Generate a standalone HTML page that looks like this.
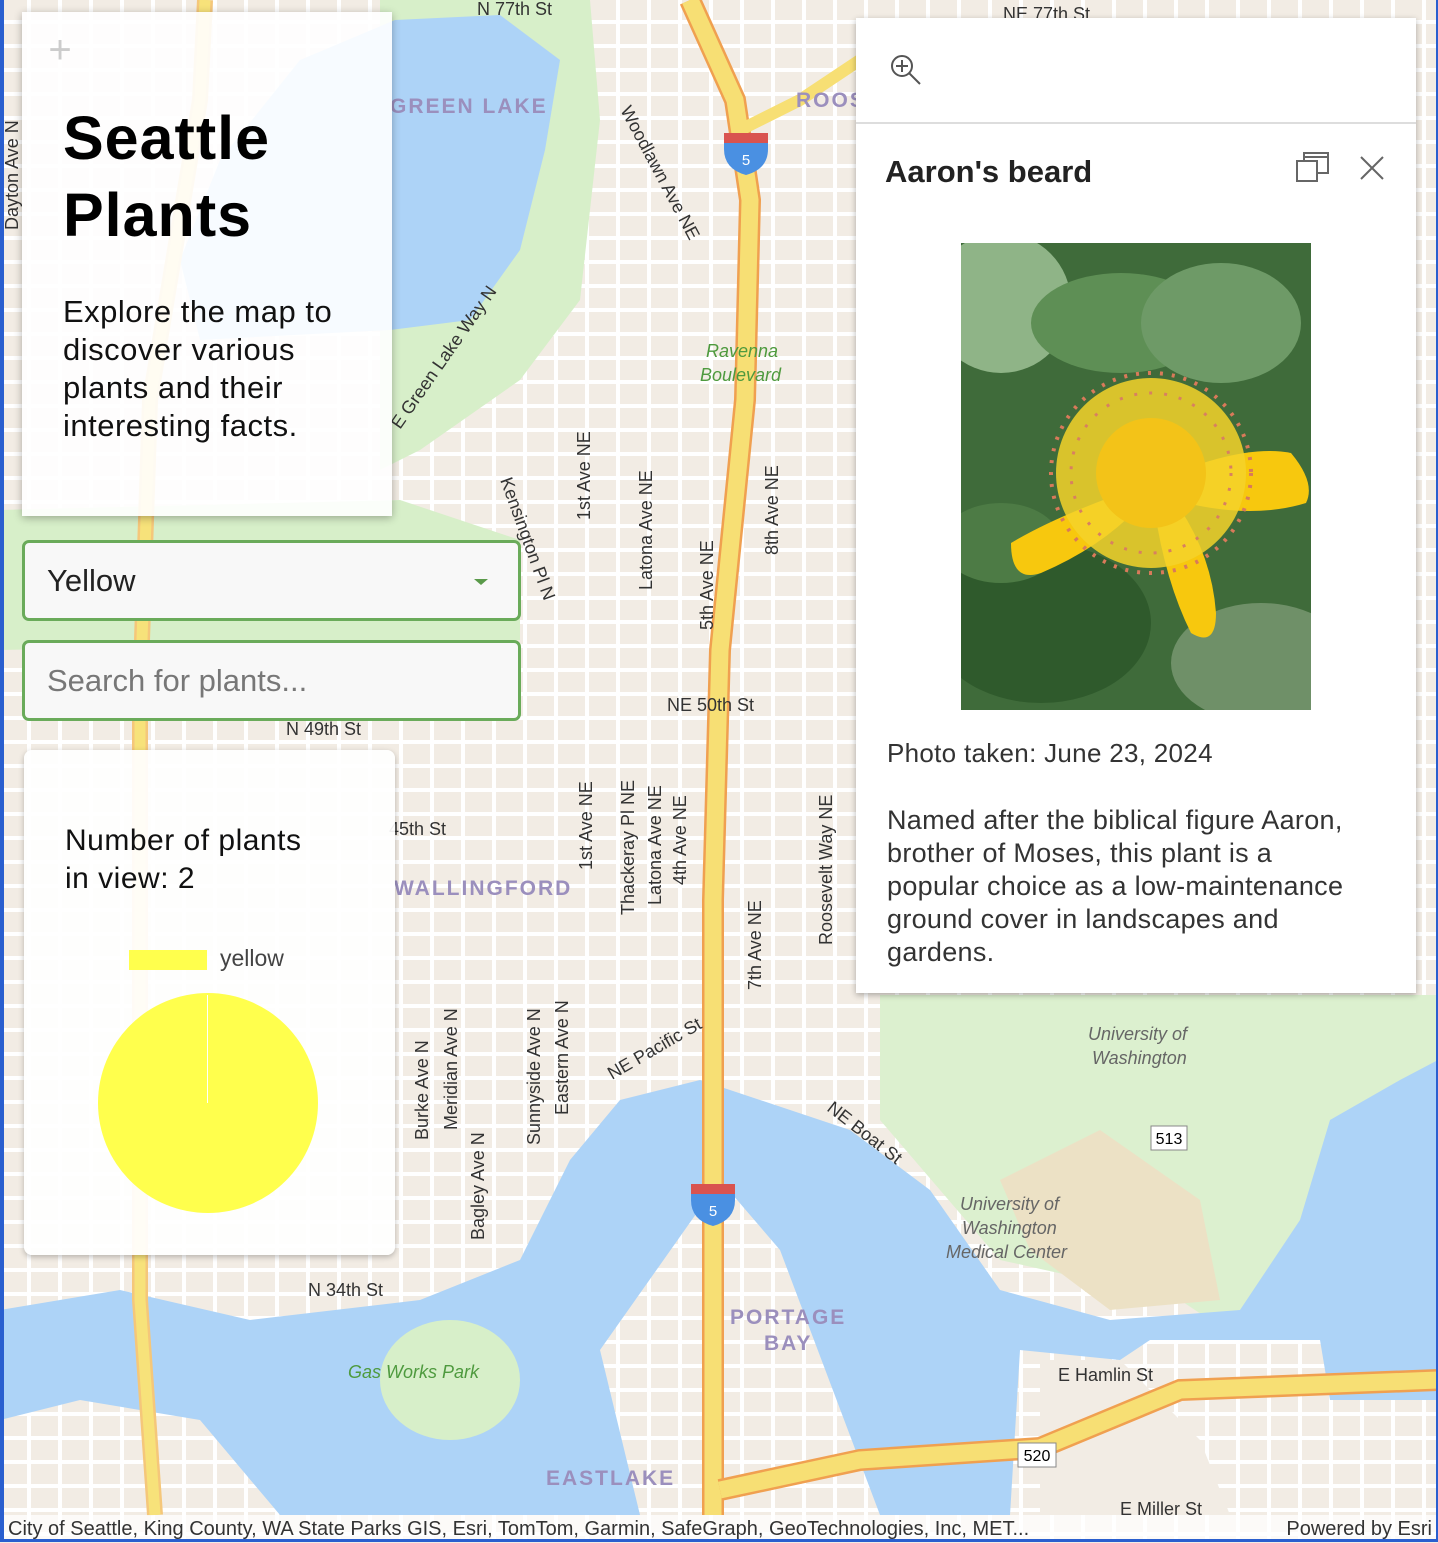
<!DOCTYPE html>
<html><head><meta charset="utf-8"><style>
*{margin:0;padding:0;box-sizing:border-box}
body{width:1438px;height:1542px;overflow:hidden;position:relative;font-family:"Liberation Sans",sans-serif;background:#f2ece4}
#map{position:absolute;left:0;top:0}
.frame{position:absolute;left:0;top:0;width:1438px;height:1542px;border-left:4px solid #2a5fcf;border-bottom:3px solid #2a5fcf;border-right:2px solid #2a5fcf;pointer-events:none}
.panel{position:absolute;background:rgba(255,255,255,0.9);box-shadow:0 2px 6px rgba(0,0,0,.25)}
.sel{position:absolute;left:22px;width:499px;height:81px;border:3px solid #6aab5a;border-radius:7px;background:#f8f8f8;font-size:31px;padding-left:22px;line-height:75px;color:#222}
</style></head><body>
<svg id="map" width="1438" height="1542" viewBox="0 0 1438 1542">
<defs>
<pattern id="grid" width="31" height="24" patternUnits="userSpaceOnUse"><rect width="31" height="24" fill="#f2ece4"/><rect x="0" y="20" width="31" height="4" fill="#fff"/><rect x="27" y="0" width="4" height="24" fill="#fff"/></pattern>
</defs>
<rect width="1438" height="1542" fill="url(#grid)"/>
<path d="M380 0 L590 0 L600 120 L580 300 L520 380 L420 450 L380 470 L380 20 Z" fill="#d7efc9"/>
<path d="M0 510 L400 500 L520 540 L520 640 L0 650 Z" fill="#d7efc9"/>
<path d="M880 995 L1438 995 L1438 1340 L1240 1340 L1180 1300 L1000 1260 L880 1120 Z" fill="#dcf0cf"/>
<path d="M1000 1180 L1100 1130 L1200 1200 L1220 1300 L1110 1310 L1030 1250 Z" fill="#ece1c5"/>
<path d="M395 20 L500 15 L560 60 L545 150 L520 250 L470 320 L390 330 L200 340 L180 260 L220 160 L300 60 Z" fill="#add3f7"/>
<path d="M0 1310 L120 1290 L250 1320 L420 1300 L520 1260 L570 1160 L620 1100 L700 1080 L760 1100 L850 1130 L930 1190 L1000 1290 L1110 1320 L1240 1310 L1300 1220 L1330 1120 L1400 1080 L1438 1060 L1438 1400 L1330 1400 L1320 1340 L1150 1340 L1120 1360 L1020 1350 L1010 1515 L880 1515 L780 1250 L720 1180 L600 1350 L640 1515 L280 1515 L200 1420 L80 1400 L0 1420 Z" fill="#add3f7"/>
<ellipse cx="450" cy="1380" rx="70" ry="60" fill="#d7efc9"/>
<path d="M1040 1360 L1120 1360 L1200 1440 L1230 1515 L1040 1515 Z" fill="#f2ece4"/>
<path d="M205 0 L200 100 L150 400 L140 700 L140 1300 L155 1515" stroke="#f5c77a" stroke-width="16" fill="none"/>
<path d="M205 0 L200 100 L150 400 L140 700 L140 1300 L155 1515" stroke="#f7e27a" stroke-width="11" fill="none"/>
<path d="M690 0 L735 100 L750 200 L745 400 L720 650 L713 900 L713 1515" stroke="#f0a050" stroke-width="22" fill="none"/>
<path d="M690 0 L735 100 L750 200 L745 400 L720 650 L713 900 L713 1515" stroke="#f7df74" stroke-width="17" fill="none"/>
<path d="M720 1490 L860 1460 L1040 1448 L1180 1390 L1438 1380" stroke="#f0a050" stroke-width="22" fill="none"/>
<path d="M720 1490 L860 1460 L1040 1448 L1180 1390 L1438 1380" stroke="#f7df74" stroke-width="17" fill="none"/>
<path d="M740 130 L800 100 L860 60" stroke="#f7df74" stroke-width="12" fill="none"/>
<path d="M724 137 h44 v12 q0 20 -22 26 q-22 -6 -22 -26z" fill="#4a90e2"/><rect x="724" y="133" width="44" height="10" fill="#d9534f"/>
<text x="746" y="165" font-size="15" fill="#fff" text-anchor="middle">5</text>
<path d="M691 1188 h44 v12 q0 20 -22 26 q-22 -6 -22 -26z" fill="#4a90e2"/><rect x="691" y="1184" width="44" height="10" fill="#d9534f"/>
<text x="713" y="1216" font-size="15" fill="#fff" text-anchor="middle">5</text>
<rect x="1151" y="1126" width="36" height="24" fill="#fff" stroke="#888"/><text x="1169" y="1144" font-size="16" text-anchor="middle">513</text>
<rect x="1018" y="1443" width="38" height="24" fill="#fff" stroke="#888"/><text x="1037" y="1461" font-size="16" text-anchor="middle">520</text>
<g font-family="Liberation Sans" fill="#333" font-size="18">
<text x="477" y="15">N 77th St</text><text x="1003" y="20">NE 77th St</text>
<text x="667" y="711">NE 50th St</text><text x="286" y="735">N 49th St</text>
<text x="308" y="1296">N 34th St</text><text x="1058" y="1381">E Hamlin St</text><text x="1120" y="1515">E Miller St</text>
<text x="389" y="835">45th St</text>
<text transform="translate(590 520) rotate(-90)">1st Ave NE</text>
<text transform="translate(652 590) rotate(-90)">Latona Ave NE</text>
<text transform="translate(713 630) rotate(-90)">5th Ave NE</text>
<text transform="translate(778 555) rotate(-90)">8th Ave NE</text>
<text transform="translate(592 870) rotate(-90)">1st Ave NE</text>
<text transform="translate(634 915) rotate(-90)">Thackeray Pl NE</text>
<text transform="translate(661 905) rotate(-90)">Latona Ave NE</text>
<text transform="translate(686 885) rotate(-90)">4th Ave NE</text>
<text transform="translate(761 990) rotate(-90)">7th Ave NE</text>
<text transform="translate(832 945) rotate(-90)">Roosevelt Way NE</text>
<text transform="translate(428 1140) rotate(-90)">Burke Ave N</text>
<text transform="translate(457 1130) rotate(-90)">Meridian Ave N</text>
<text transform="translate(484 1240) rotate(-90)">Bagley Ave N</text>
<text transform="translate(540 1145) rotate(-90)">Sunnyside Ave N</text>
<text transform="translate(568 1115) rotate(-90)">Eastern Ave N</text>
<text transform="translate(18 230) rotate(-90)">Dayton Ave N</text>
<text transform="translate(612 1080) rotate(-30)">NE Pacific St</text>
<text transform="translate(826 1110) rotate(38)">NE Boat St</text>
<text transform="translate(400 430) rotate(-55)">E Green Lake Way N</text>
<text transform="translate(620 110) rotate(62)">Woodlawn Ave NE</text>
<text transform="translate(500 480) rotate(70)">Kensington Pl N</text>
</g>
<g font-family="Liberation Sans" font-weight="bold" fill="#9b8fbd" font-size="21" letter-spacing="2">
<text x="390" y="113">GREEN LAKE</text><text x="394" y="895">WALLINGFORD</text>
<text x="730" y="1324">PORTAGE</text><text x="764" y="1350">BAY</text><text x="546" y="1485">EASTLAKE</text><text x="796" y="107">ROOS</text>
</g>
<g font-family="Liberation Sans" font-style="italic" font-size="18">
<text x="706" y="357" fill="#4e9a3e">Ravenna</text><text x="700" y="381" fill="#4e9a3e">Boulevard</text>
<text x="348" y="1378" fill="#4e9a3e">Gas Works Park</text>
<text x="1088" y="1040" fill="#666">University of</text><text x="1092" y="1064" fill="#666">Washington</text>
<text x="960" y="1210" fill="#666">University of</text><text x="962" y="1234" fill="#666">Washington</text><text x="946" y="1258" fill="#666">Medical Center</text>
</g>
</svg>

<div class="panel" style="left:22px;top:12px;width:370px;height:504px;box-shadow:0 2px 8px rgba(0,0,0,.3)">
<div style="position:absolute;left:6px;top:8px;width:64px;height:80px;color:#ccc;font-size:40px;text-align:center;line-height:60px">+</div>
<div style="position:absolute;left:41px;top:88px;font-size:61px;font-weight:bold;line-height:77px;color:#000;letter-spacing:1px">Seattle<br>Plants</div>
<div style="position:absolute;left:41px;top:281px;font-size:31px;line-height:38px;color:#111;white-space:nowrap;letter-spacing:0.5px">Explore the map to<br>discover various<br>plants and their<br>interesting facts.</div>
</div>

<div class="sel" style="top:540px">Yellow<span style="position:absolute;right:30px;top:36px;border-left:7px solid transparent;border-right:7px solid transparent;border-top:6px solid #5a9a4a"></span></div>
<div class="sel" style="top:640px;color:#777">Search for plants...</div>

<div class="panel" style="left:24px;top:750px;width:371px;height:505px;border-radius:8px;background:rgba(255,255,255,0.93)">
<div style="position:absolute;left:41px;top:72px;font-size:30px;line-height:38px;color:#111;letter-spacing:0.5px">Number of plants<br>in view: 2</div>
<div style="position:absolute;left:105px;top:200px;width:78px;height:20px;background:#ffff4d"></div>
<div style="position:absolute;left:196px;top:195px;font-size:23px;color:#444">yellow</div>
<div style="position:absolute;left:74px;top:243px;width:220px;height:220px;border-radius:50%;background:#ffff4d"></div>
<div style="position:absolute;left:183px;top:245px;width:1px;height:108px;background:#fff"></div>
</div>

<div style="position:absolute;left:856px;top:18px;width:560px;height:975px;background:#fff;box-shadow:0 2px 6px rgba(0,0,0,.3)">
<svg style="position:absolute;left:33px;top:35px" width="34" height="34" viewBox="0 0 34 34"><circle cx="13" cy="13" r="10" fill="none" stroke="#555" stroke-width="2"/><path d="M13 7v12M7 13h12M20 20l11 11" stroke="#555" stroke-width="2"/></svg>
<div style="position:absolute;left:0;top:104px;width:560px;height:2px;background:#ddd"></div>
<div style="position:absolute;left:29px;top:136px;font-size:31px;font-weight:bold;color:#222">Aaron's beard</div>
<svg style="position:absolute;left:440px;top:133px" width="34" height="32" viewBox="0 0 34 32"><rect x="1" y="10" width="20" height="20" fill="#fff" stroke="#666" stroke-width="2"/><path d="M8 10V2h24v20h-11M8 6h24" fill="none" stroke="#666" stroke-width="2"/></svg>
<svg style="position:absolute;left:502px;top:136px" width="28" height="28" viewBox="0 0 28 28"><path d="M3 3L25 25M25 3L3 25" stroke="#666" stroke-width="2"/></svg>
<svg style="position:absolute;left:105px;top:225px" width="350" height="467" viewBox="0 0 350 467">
<rect width="350" height="467" fill="#3f6b3a"/>
<ellipse cx="40" cy="60" rx="70" ry="70" fill="#8fb487"/>
<ellipse cx="160" cy="80" rx="90" ry="50" fill="#5e8f55"/>
<ellipse cx="260" cy="80" rx="80" ry="60" fill="#6e9a67"/>
<ellipse cx="300" cy="420" rx="90" ry="60" fill="#6f9068"/>
<ellipse cx="80" cy="380" rx="110" ry="80" fill="#2f5a2c"/>
<ellipse cx="40" cy="300" rx="60" ry="40" fill="#4d7b45"/>
<path d="M190 240 Q100 270 50 300 Q50 340 80 330 Q150 300 190 250 Z" fill="#f7c80e"/>
<path d="M190 240 Q280 200 330 210 Q355 240 345 260 Q280 280 190 250 Z" fill="#f7c80e"/>
<path d="M190 240 Q200 330 230 390 Q255 405 255 370 Q250 300 200 240 Z" fill="#f7c80e"/>
<circle cx="190" cy="230" r="95" fill="#f5d22a" opacity=".85"/>
<circle cx="190" cy="230" r="55" fill="#f3c318"/>
<circle cx="190" cy="230" r="100" fill="none" stroke="#d97a5a" stroke-width="4" stroke-dasharray="3 9"/>
<circle cx="190" cy="230" r="80" fill="none" stroke="#d88060" stroke-width="3" stroke-dasharray="3 12"/>
</svg>
<div style="position:absolute;left:31px;top:720px;font-size:26px;color:#333;letter-spacing:0.3px">Photo taken: June 23, 2024</div>
<div style="position:absolute;left:31px;top:786px;font-size:27px;line-height:33px;color:#333;white-space:nowrap;letter-spacing:0.3px">Named after the biblical figure Aaron,<br>brother of Moses, this plant is a<br>popular choice as a low-maintenance<br>ground cover in landscapes and<br>gardens.</div>
</div>

<div style="position:absolute;left:0;top:1515px;width:1438px;height:27px;background:rgba(255,255,255,0.75);font-size:20px;line-height:28px;color:#333;padding-left:8px;white-space:nowrap">City of Seattle, King County, WA State Parks GIS, Esri, TomTom, Garmin, SafeGraph, GeoTechnologies, Inc, MET...<span style="position:absolute;right:6px">Powered by Esri</span></div>
<div class="frame"></div>
</body></html>
